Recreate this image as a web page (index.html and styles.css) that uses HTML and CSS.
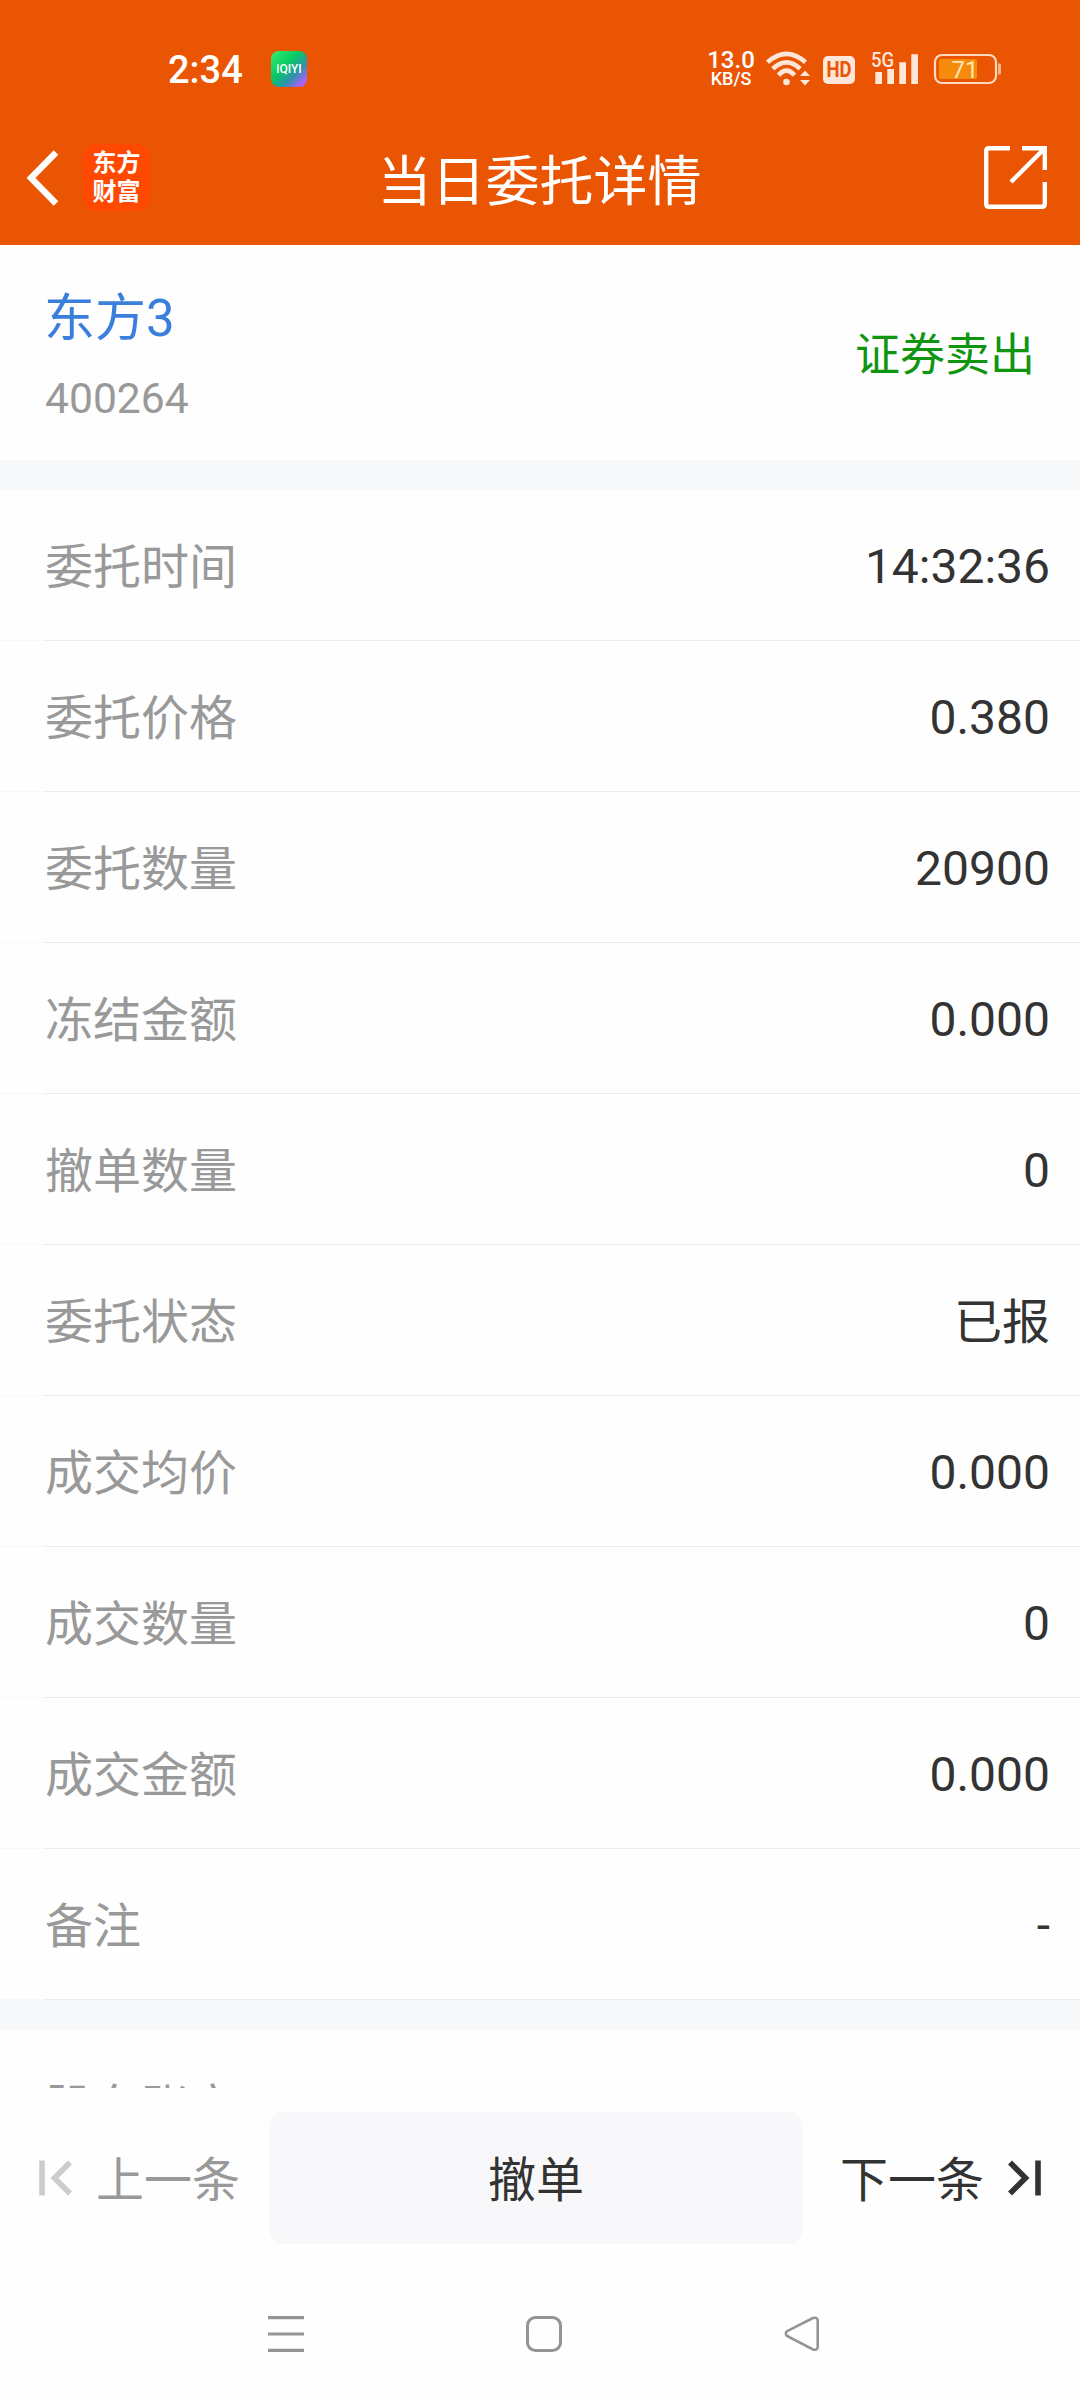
FILE: index.html
```html
<!DOCTYPE html>
<html lang="zh-CN">
<head>
    <meta charset="utf-8">
    <title>当日委托详情</title>
    <link rel="stylesheet" href="styles.css">
</head>
<body>
    <div class="page">
        <div class="header">
            <div class="status">
                <span class="status__time">2:34</span>
                <span class="status__app">iQIYI</span>
                <div class="status__speed">
                    <span class="status__num">13.0</span>
                    <span class="status__unit">KB/S</span>
                </div>
                <svg class="status__wifi" width="45" height="36" viewBox="0 0 45 36">
                    <g fill="none" stroke="#fee6d9" stroke-width="4.6">
                        <path d="M1.5 11.2Q20.5-5.6 39.5 11.2"/>
                        <path d="M6.8 17.8Q20.5 5 34.2 17.8"/>
                        <path d="M12.5 24.3Q20.5 15 28.5 24.3"/>
                    </g>
                    <circle cx="20.5" cy="31" r="3.3" fill="#fee6d9"/>
                    <path d="M34 25l5-5.5 5 5.5zM34 29h10l-5 5.5z" fill="#fee6d9"/>
                </svg>
                <div class="status__hd">
                    <span class="status__hd-text">HD</span>
                </div>
                <div class="status__signal">
                    <span class="status__5g">5G</span>
                    <svg width="48" height="36" viewBox="0 0 48 36">
                        <path d="M4.3 21h6.7v12h-6.7zM16.3 18h6.7v15h-6.7zM28.3 11.2h6.7v21.8h-6.7zM40.3 3.2h6.7v29.8h-6.7z" fill="#fee6d9"/>
                    </svg>
                </div>
                <svg class="status__battery" width="68" height="36" viewBox="0 0 68 36">
                    <rect x="2" y="4" width="61" height="28" rx="7" fill="none" stroke="#fdd9c0" stroke-width="2.2"/>
                    <rect x="6" y="8" width="38" height="20" rx="2" fill="#f68b0b"/>
                    <path d="M65 12.5h1.5q1.5 0 1.5 1.5v8q0 1.5-1.5 1.5h-1.5z" fill="#f9b48c"/>
                    <text x="18.5" y="26.5" class="status__percent">71</text>
                </svg>
            </div>
            <div class="nav">
                <div class="nav__left">
                    <svg width="34" height="56" viewBox="0 0 34 56">
                        <path d="M30 2.5L5 28l25 25.5" fill="none" stroke="#fff" stroke-width="6.4"/>
                    </svg>
                    <div class="nav__logo">东方<br>财富</div>
                </div>
                <h1 class="nav__title">当日委托详情</h1>
                <svg class="nav__share" width="63" height="63" viewBox="0 0 63 63">
                    <path d="M26 2.2H5q-2.8 0-2.8 2.8V58q0 2.8 2.8 2.8H58q2.8 0 2.8-2.8V36M38 2.2H60.8V24M60 3L27 36" fill="none" stroke="#fff" stroke-width="4.4"/>
                </svg>
            </div>
        </div>

        <div class="stock">
            <div>
                <div class="stock__name">东方3</div>
                <div class="stock__code">400264</div>
            </div>
            <div class="stock__type">证券卖出</div>
        </div>

        <div class="content">
            <ul class="list">
                <li class="list__item"><span class="list__label">委托时间</span><span class="list__value">14:32:36</span></li>
                <li class="list__item"><span class="list__label">委托价格</span><span class="list__value">0.380</span></li>
                <li class="list__item"><span class="list__label">委托数量</span><span class="list__value">20900</span></li>
                <li class="list__item"><span class="list__label">冻结金额</span><span class="list__value">0.000</span></li>
                <li class="list__item"><span class="list__label">撤单数量</span><span class="list__value">0</span></li>
                <li class="list__item"><span class="list__label">委托状态</span><span class="list__value list__value--text">已报</span></li>
                <li class="list__item"><span class="list__label">成交均价</span><span class="list__value">0.000</span></li>
                <li class="list__item"><span class="list__label">成交数量</span><span class="list__value">0</span></li>
                <li class="list__item"><span class="list__label">成交金额</span><span class="list__value">0.000</span></li>
                <li class="list__item"><span class="list__label">备注</span><span class="list__value">-</span></li>
            </ul>
            <ul class="list">
                <li class="list__item"><span class="list__label">股东账户</span></li>
            </ul>
        </div>

        <div class="footer">
            <div class="footer__prev">
                <svg width="33" height="36" viewBox="0 0 33 36">
                    <path d="M3 .5v35M31 2.5L15.5 18 31 33.5" fill="none" stroke="#ccc" stroke-width="5.6"/>
                </svg>
                <span class="footer__text">上一条</span>
            </div>
            <div class="footer__cancel">撤单</div>
            <div class="footer__next">
                <span class="footer__text">下一条</span>
                <svg width="33" height="36" viewBox="0 0 33 36">
                    <path d="M30 .5v35M2 2.5L17.5 18 2 33.5" fill="none" stroke="#333" stroke-width="5.6"/>
                </svg>
            </div>
        </div>

        <div class="system">
            <svg width="36" height="36" viewBox="0 0 36 36">
                <path d="M0 1.7h36M0 18h36M0 34.3h36" stroke="#949494" stroke-width="3.2"/>
            </svg>
            <svg width="36" height="36" viewBox="0 0 36 36">
                <rect x="1.5" y="1.5" width="33" height="33" rx="8" fill="none" stroke="#949494" stroke-width="3"/>
            </svg>
            <svg width="36" height="36" viewBox="0 0 36 36">
                <path d="M29 2L3 15.2Q.8 17.7 3 20L29 33.5Q33.5 34.500 33.7 31V4.5Q33.5 1 29 2z" fill="none" stroke="#949494" stroke-width="2.6"/>
            </svg>
        </div>
    </div>
</body>
</html>
```

FILE: styles.css
```css
* {
    margin: 0;
    padding: 0;
    box-sizing: border-box;
}
ul, li {
    list-style: none;
}
svg {
    display: block;
    flex: none;
}
body {
    background: #fefefe;
    color: #333;
    font-family: Roboto, "Noto Sans CJK SC", sans-serif;
}
.page {
    display: flex;
    flex-direction: column;
    width: 1080px;
    height: 2400px;
    overflow: hidden;
}

/* 顶部 */
.header {
    height: 245px;
    background: #ea5504;
    color: #fff;
}
.status {
    display: flex;
    align-items: center;
    height: 110px;
    padding: 28px 79px 0 168px;
}
.status__time {
    width: 103px;
    padding-top: 2px;
    font-size: 38px;
    font-weight: 500;
    line-height: 36px;
}
.status__app {
    width: 36px;
    height: 36px;
    border-radius: 8px;
    background: linear-gradient(135deg, #2be56c 10%, #08c963 40%, #2b95a8 65%, #b35cff 90%);
    font-size: 12px;
    font-weight: 500;
    line-height: 36px;
    text-align: center;
}
.status__speed {
    display: flex;
    flex-direction: column;
    align-items: center;
    width: 46px;
    margin-left: auto;
    font-weight: 500;
}
.status__num {
    font-size: 24px;
    line-height: 20px;
}
.status__unit {
    font-size: 18px;
    line-height: 18px;
}
.status__wifi {
    margin-left: 12px;
}
.status__hd {
    display: flex;
    justify-content: center;
    width: 32px;
    height: 28px;
    margin: 2px 0 0 12px;
    border-radius: 5px;
    background: #fee6d9;
}
.status__hd-text {
    color: #ea5504;
    font-size: 22px;
    font-weight: 700;
    line-height: 28px;
    transform: scaleX(0.84);
}
.status__signal {
    position: relative;
    margin-left: 16px;
}
.status__5g {
    position: absolute;
    top: 1px;
    left: 0;
    color: #fee6d9;
    font-size: 21px;
    font-weight: 500;
    line-height: 17px;
    transform: scaleX(0.88);
    transform-origin: left;
}
.status__battery {
    margin-left: 14px;
}
.status__percent {
    fill: #fee6b0;
    font-size: 24px;
    font-weight: 400;
}
.nav {
    display: grid;
    grid-template-columns: 200px 1fr 200px;
    align-items: center;
    height: 135px;
    padding: 0 33px 0 26px;
}
.nav__left {
    display: flex;
    align-items: center;
    gap: 23px;
}
.nav__logo {
    width: 67px;
    height: 67px;
    padding-top: 5px;
    border-radius: 13px;
    background: #ff4800;
    font-size: 24px;
    font-weight: 700;
    line-height: 29px;
    text-align: center;
}
.nav__title {
    padding: 10px 0 0 6px;
    font-size: 54px;
    font-weight: 400;
    line-height: 80px;
    text-align: center;
    white-space: nowrap;
}
.nav__share {
    justify-self: end;
}

/* 股票信息 */
.stock {
    display: flex;
    justify-content: space-between;
    align-items: center;
    height: 215px;
    padding: 10px 45px 0;
}
.stock__name {
    margin-left: -1px;
    color: #3a7fdb;
    font-size: 51px;
    line-height: 80px;
}
.stock__code {
    color: #999;
    font-size: 42.6px;
    line-height: 78px;
}
.stock__type {
    padding-bottom: 3px;
    color: #109510;
    font-size: 45px;
    line-height: 66px;
}

/* 委托明细 */
.content {
    height: 1628px;
    overflow: hidden;
}
.list {
    border-top: 30px solid #f7f8fa;
}
.list__item {
    display: flex;
    justify-content: space-between;
    align-items: center;
    height: 151px;
    padding: 0 30px 0 45px;
    background: linear-gradient(to right, #f7f7f7 45px, #ebebeb 45px) bottom / 100% 1px no-repeat;
    font-size: 48px;
    line-height: 72px;
}
.list__label {
    padding-top: 4px;
    color: #999;
}
.list__value {
    padding-top: 2px;
}
.list__value--text {
    padding-top: 4px;
}

/* 底部操作 */
.footer {
    display: flex;
    align-items: center;
    height: 180px;
    padding: 0 39px;
    font-size: 48px;
    line-height: 72px;
}
.footer__prev,
.footer__next {
    display: flex;
    align-items: center;
}
.footer__prev {
    gap: 24px;
    width: 231px;
    color: #999;
}
.footer__text {
    padding-top: 6px;
}
.footer__cancel {
    width: 532px;
    height: 132px;
    padding-top: 3px;
    border-radius: 12px;
    background: #f8f8fa;
    line-height: 132px;
    text-align: center;
}
.footer__next {
    gap: 24px;
    margin-left: auto;
}

/* 系统导航 */
.system {
    display: flex;
    align-items: center;
    gap: 222px;
    height: 132px;
    padding-left: 268px;
}
```
